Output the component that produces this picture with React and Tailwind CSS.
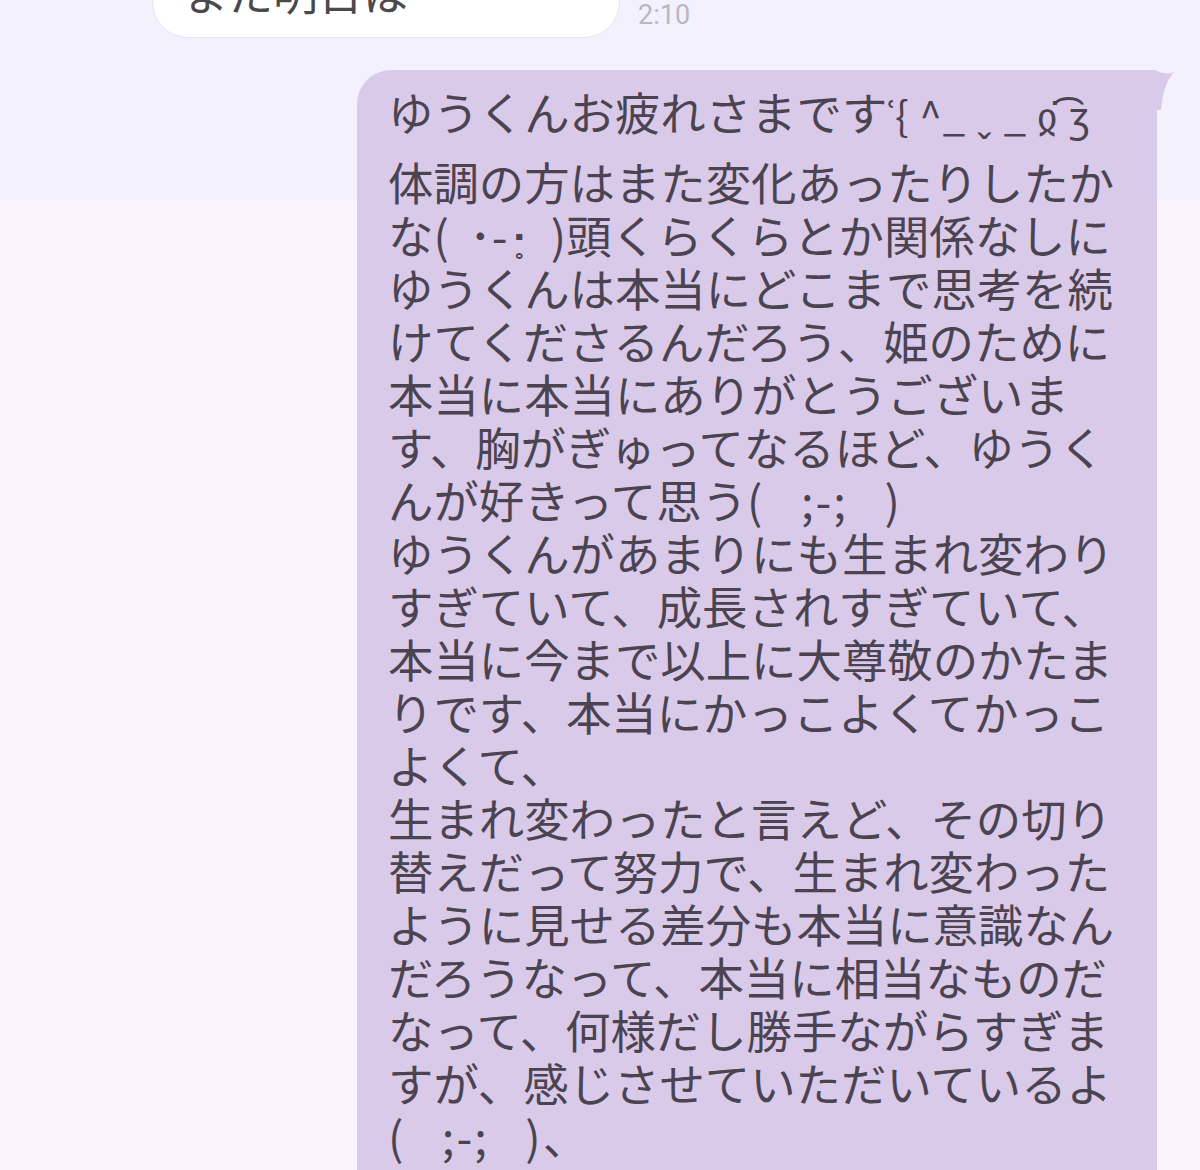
import React from 'react';

const lines = [
  '体調の方はまた変化あったりしたか',
  'な(  ･-･̥  )頭くらくらとか関係なしに',
  'ゆうくんは本当にどこまで思考を続',
  'けてくださるんだろう、姫のために',
  '本当に本当にありがとうございま',
  'す、胸がぎゅってなるほど、ゆうく',
  ['んが好きって思う', '(   ;-;   )'],
  'ゆうくんがあまりにも生まれ変わり',
  'すぎていて、成長されすぎていて、',
  '本当に今まで以上に大尊敬のかたま',
  'りです、本当にかっこよくてかっこ',
  'よくて、',
  '生まれ変わったと言えど、その切り',
  '替えだって努力で、生まれ変わった',
  'ように見せる差分も本当に意識なん',
  'だろうなって、本当に相当なものだ',
  'なって、何様だし勝手ながらすぎま',
  'すが、感じさせていただいているよ',
  ['', '(   ;-;   )', '、'],
];

const kaomoji = 'ʿ{ ^_ ˬ _ ჲ͘ ͡ʒ';

const font = { fontFamily: '"Noto Sans CJK JP", "Noto Sans", sans-serif' };

export default function App() {
  return (
    <div
      className="w-[1200px] h-[1170px] overflow-hidden bg-[linear-gradient(to_bottom,#f3f1fd_200px,#f8f4fb_200px)]"
      style={font}
    >
      {/* previous message from the other side */}
      <div className="flex items-end pl-[152px] -mt-[57px]">
        <div className="w-[468px] bg-white rounded-b-[36px] rounded-t-[36px] border border-[#e7e5f0] pt-[21px] pb-[19px] pl-[30px]">
          <div className="text-[45px] leading-[53px] text-[#4a4a4a] whitespace-nowrap">また明日は</div>
        </div>
        <div className="ml-[18px] mb-[8px] text-[27px] leading-[30px] text-[#b8b7c1]" style={{ fontFamily: 'Roboto, sans-serif' }}>
          2:10
        </div>
      </div>

      {/* my message */}
      <div className="flex justify-end pr-[43px] mt-[32px]">
        <div className="relative w-[800px] bg-[#dacaea] rounded-tl-[34px] rounded-tr-[12px] pt-[15px] pl-[31px] pb-[40px] text-[#4b4450]">
          <svg className="absolute -right-[18px] top-0" width="32" height="40" viewBox="0 0 32 40">
            <path d="M0 0 H12 Q24 6 31 2 Q20 14 18 40 H0 Z" fill="#dacaea" />
          </svg>
          <div className="text-[45.4px] leading-[53px] whitespace-nowrap mb-[14px]">
            ゆうくんお疲れさまです
            <span className="text-[40px] tracking-[1px]">{kaomoji}</span>
          </div>
          {lines.map((line, i) => (
            <div key={i} className="text-[45.4px] leading-[53px] whitespace-pre">
              {Array.isArray(line) ? (
                <>
                  {line[0]}
                  <span className="tracking-[2px]">{line[1]}</span>
                  {line[2]}
                </>
              ) : (
                line
              )}
            </div>
          ))}
        </div>
      </div>
    </div>
  );
}
